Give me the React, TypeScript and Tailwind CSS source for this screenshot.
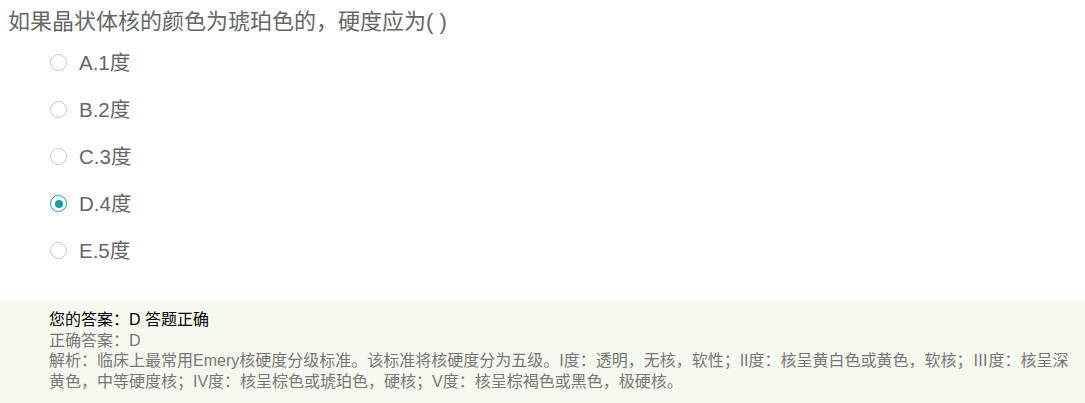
import React from "react";

const options = [
  { label: "A.1度", checked: false },
  { label: "B.2度", checked: false },
  { label: "C.3度", checked: false },
  { label: "D.4度", checked: true },
  { label: "E.5度", checked: false },
];

function Radio({ checked }: { checked: boolean }) {
  if (checked) {
    return (
      <span className="box-border flex h-[17px] w-[17px] shrink-0 items-center justify-center rounded-full border-[1.5px] border-[#1a9ea7] bg-white">
        <span className="h-[8px] w-[8px] rounded-full bg-[#1a9ea7]" />
      </span>
    );
  }
  return <span className="box-border block h-[17px] w-[17px] shrink-0 rounded-full border-[1.5px] border-[#c8c8c8] bg-white" />;
}

export default function App() {
  return (
    <div
      className="w-[1085px] min-h-[403px] bg-white text-[#666]"
      style={{ fontFamily: '"Liberation Sans", Arial, "Noto Sans CJK SC", sans-serif' }}
    >
      <div className="pt-[7px] pl-[8px]">
        <div className="text-[22px] leading-[30px] text-[#666]">如果晶状体核的颜色为琥珀色的，硬度应为( )</div>
      </div>
      <div className="mt-[2px] pl-[50px]">
        {options.map((o) => (
          <div key={o.label} className="flex h-[47px] items-center gap-[12px]">
            <Radio checked={o.checked} />
            <span className="text-[20.5px] leading-[24px] text-[#666]">{o.label}</span>
          </div>
        ))}
      </div>
      <div className="mt-[26px] bg-[#f5f8ef] pl-[49px] pr-[10px] pt-[10px] pb-[10px] text-[16px] leading-[20.67px] text-[#777]">
        <div className="text-black">您的答案：D 答题正确</div>
        <div>正确答案：D</div>
        <div>
          解析：临床上最常用Emery核硬度分级标准。该标准将核硬度分为五级。I度：透明，无核，软性；II度：核呈黄白色或黄色，软核；Ⅲ度：核呈深黄色，中等硬度核；IV度：核呈棕色或琥珀色，硬核；V度：核呈棕褐色或黑色，极硬核。
        </div>
      </div>
    </div>
  );
}
